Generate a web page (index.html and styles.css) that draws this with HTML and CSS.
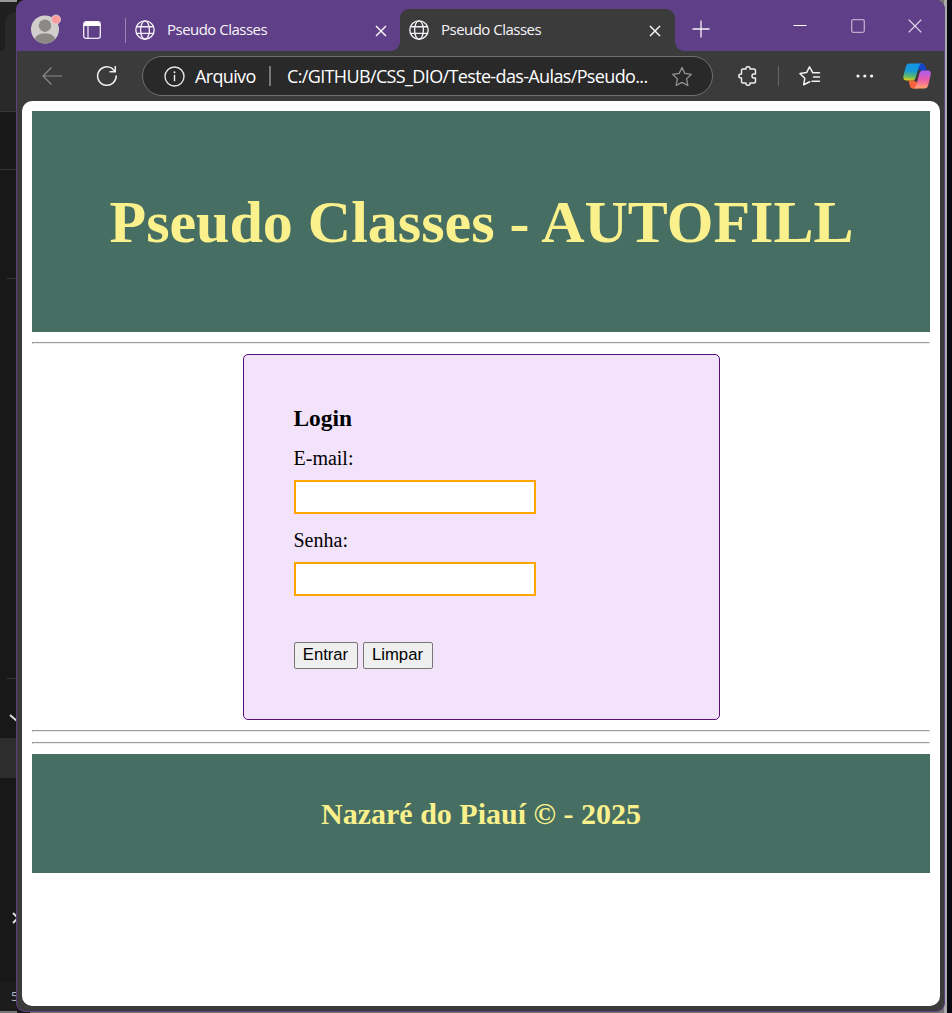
FILE: index.html
```html
<!DOCTYPE html>
<html lang="pt-BR">
<head>
<meta charset="utf-8">
<title>Pseudo Classes</title>
<link rel="stylesheet" href="styles.css">
</head>
<body>
<svg class="defs" aria-hidden="true">
  <symbol id="globe" viewBox="0 0 20 20"><g fill="none" stroke="#f4f0f7" stroke-width="1.35"><circle cx="10" cy="10" r="9.2"/><ellipse cx="10" cy="10" rx="4.4" ry="9.2"/><path d="M1.5 6.700h17M1.500 13.300h17"/></g></symbol>
  <symbol id="cross" viewBox="0 0 12 12"><path d="M1 1l10 10M11 1L1 11" stroke="#f6f3f8" stroke-width="1.5"/></symbol>
</svg>
<div class="desktop">
  <svg class="backdrop" width="17" height="1013" viewBox="0 0 17 1013">
    <path d="M0 0h17v1013H0z" fill="#181818"/>
    <path d="M0 0h17v2H0z" fill="#969996"/>
    <path d="M0 2h17v109H0z" fill="#292929"/>
    <path d="M0 2h17v10q-11 0-12 12v22q0 5-5 5z" fill="#1f1f1f"/>
    <path d="M0 111.500h17M0 169.500h17M7 278.500h10M7 678.500h10" stroke="#373737"/>
    <path d="M0 738h17v40H0z" fill="#2d2d2d"/>
    <path d="M10 715l7 6M13 913l5 5-5 5" stroke="#ddd" stroke-width="2" fill="none"/>
    <path d="M0 982h17v29H0z" fill="#1c1c1c"/>
    <path d="M0 1011h17v2H0z" fill="#777"/>
    <text x="11" y="1001" class="backdrop-text">5</text>
  </svg>
  <div class="window">
    <div class="tabbar">
      <svg class="avatar" width="32" height="32" viewBox="0 0 32 32"><defs><clipPath id="face"><circle cx="15" cy="17.500" r="14"/></clipPath></defs><circle cx="15" cy="17.500" r="14" fill="#d1cfce"/><g clip-path="url(#face)" fill="#8b8886"><circle cx="15" cy="13.700" r="6.200"/><ellipse cx="15" cy="28" rx="10.500" ry="6.700"/></g><circle cx="26" cy="7.500" r="4.500" fill="#ff9c99" stroke="#ddd4e6" stroke-width=".8"/></svg>
      <svg class="workspaces" width="18" height="18" viewBox="0 0 18 18"><rect x=".7" y=".7" width="16.600" height="16.600" rx="2.300" fill="none" stroke="#f3eef7" stroke-width="1.300"/><path d="M1 5V3q0-2 2-2h12q2 0 2 2v2z" fill="#fff"/><path d="M5 5v12" stroke="#f3eef7" stroke-width="1.200"/></svg>
      <span class="tab-divider"></span>
      <div class="tab"><svg width="20" height="20"><use href="#globe"/></svg><span>Pseudo Classes</span><svg class="close" width="12" height="12"><use href="#cross"/></svg></div>
      <div class="tab active"><svg width="20" height="20"><use href="#globe"/></svg><span>Pseudo Classes</span><svg class="close" width="12" height="12"><use href="#cross"/></svg></div>
      <svg class="newtab" width="18" height="18" viewBox="0 0 18 18"><path d="M9 .500v17M.500 9h17" stroke="#f6f3f8" stroke-width="1.300"/></svg>
      <div class="controls">
        <svg width="14" height="14" viewBox="0 0 14 14"><path d="M.500 6.500h13" stroke="#fff"/></svg>
        <svg width="14" height="14" viewBox="0 0 14 14"><rect x=".7" y=".7" width="12.600" height="12.600" rx="1.500" fill="none" stroke="#bcabcf" stroke-width="1.300"/></svg>
        <svg width="14" height="14" viewBox="0 0 14 14"><path d="M.700.700l12.600 12.600M13.300.700L.700 13.300" stroke="#e9e2ef" stroke-width="1.200"/></svg>
      </div>
    </div>
    <div class="toolbar">
      <svg class="back" width="20" height="18" viewBox="0 0 20 18"><path d="M20 9H1M9.500.500L1 9l8.500 8.500" fill="none" stroke="#898989" stroke-width="1.200"/></svg>
      <svg class="reload" width="22" height="22" viewBox="0 0 22 22"><path d="M20.200 10.500A9.300 9.300 0 1 1 15.800 3.100L19 6.500M19.300 1v5.700h-5.800" fill="none" stroke="#f1f1f1" stroke-width="1.500"/></svg>
      <div class="address">
        <svg class="info" width="21" height="21" viewBox="0 0 21 21"><circle cx="10.500" cy="10.500" r="9.500" fill="none" stroke="#e5e5e5" stroke-width="1.400"/><path d="M10.500 8.800v6.400" stroke="#eee" stroke-width="1.400"/><circle cx="10.500" cy="6.200" r="1" fill="#eee"/></svg>
        <span class="scheme">Arquivo</span>
        <span class="address-divider"></span>
        <span class="path">C:/GITHUB/CSS_DIO/Teste-das-Aulas/Pseudo...</span>
        <svg class="star" width="22" height="21" viewBox="0 0 22 21"><path d="M11 1.500l2.800 5.900 6.600.900-4.800 4.600 1.200 6.600L11 16.400l-5.800 3.100 1.200-6.600L1.600 8.300l6.600-.900z" fill="none" stroke="#939393" stroke-width="1.300" stroke-linejoin="round"/></svg>
      </div>
      <svg class="extension" width="20" height="20" viewBox="0 0 20 20"><path d="M5 3H8q-.3-2.300 2-2.300T12 3h4q1.500 0 1.500 1.500V8h-1.700q-1.800 0-1.800 2t1.800 2h1.700v3.500q0 1.500-1.500 1.500H12q.3 2.300-2 2.300T8 17H5q-1.500 0-1.500-1.500V12Q.8 12 .8 10T3.500 8V4.500Q3.500 3 5 3z" fill="none" stroke="#f0f0f0" stroke-width="1.450" stroke-linejoin="round"/></svg>
      <span class="tool-divider"></span>
      <svg class="favorites" width="22" height="20" viewBox="0 0 22 20"><path d="M13.600 6.400L10.500.900 7.600 6.600 1 7.600l4.800 4.700-1.100 6.400 6-2.900M13.500 6.700h7M14.500 11h6M13 15.300h7.500" fill="none" stroke="#f0f0f0" stroke-width="1.500" stroke-linejoin="round" stroke-linecap="round"/></svg>
      <svg class="more" width="18" height="4" viewBox="0 0 18 4"><g fill="#f4f4f4"><circle cx="2" cy="2" r="1.600"/><circle cx="8.800" cy="2" r="1.600"/><circle cx="15.600" cy="2" r="1.600"/></g></svg>
      <svg class="copilot" width="28" height="26" viewBox="0 0 28 26">
        <defs>
          <linearGradient id="cool" x1=".1" y1="0" x2="0" y2="1"><stop offset="0" stop-color="#1595e8"/><stop offset=".4" stop-color="#1699d6"/><stop offset=".72" stop-color="#5bb86c"/><stop offset="1" stop-color="#f5cf13"/></linearGradient>
          <linearGradient id="warm" x1="0" y1="0" x2="0" y2="1"><stop offset="0" stop-color="#a75ef2"/><stop offset=".5" stop-color="#e85bab"/><stop offset="1" stop-color="#ffa36c"/></linearGradient>
        </defs>
        <path d="M13 .500h6.500q2 0 2.700 2.500l1.300 4.500h-5.500l-4-2z" fill="#1744c6"/>
        <path d="M15 25.500H9.500q-2 0-2.600-2.500L5.500 17.500H11l3 2z" fill="#f5623b"/>
        <path d="M6.500.500H19q-2.300.400-3.200 3.500L12.500 15q-.800 2.500-3 2.500H3.500Q-.300 17.500.400 13L2.700 4Q3.700.500 6.500.500z" fill="url(#cool)"/>
        <path d="M21.500 25.500H10q2.500-.500 3.300-3.500L16.500 10q.800-2.500 3-2.500H25q3.300 0 2.700 4.500L25.300 22q-1 3.500-3.800 3.500z" fill="url(#warm)"/>
      </svg>
    </div>
    <main class="page">
      <header class="banner"><h1>Pseudo Classes - AUTOFILL</h1></header>
      <hr>
      <form class="login">
        <h3>Login</h3>
        <label for="email">E-mail:</label>
        <input type="email" id="email">
        <label for="senha">Senha:</label>
        <input type="password" id="senha">
        <div class="buttons"><button type="button">Entrar</button><button type="reset">Limpar</button></div>
      </form>
      <hr>
      <hr>
      <footer class="banner foot"><h2>Nazaré do Piauí © - 2025</h2></footer>
    </main>
  </div>
</div>
</body>
</html>
```

FILE: styles.css
```css
* { box-sizing: border-box; }
body { margin: 0; overflow: hidden; font-family: "Liberation Serif", serif; }
svg { display: block; flex: none; }
.defs { position: absolute; width: 0; height: 0; }

.desktop {
  display: flex;
  width: 952px;
  height: 1013px;
  background: linear-gradient(90deg, #181818 0 30px, #777 30px 944px, #aaa 944px 947px, #090913 947px);
}
.backdrop { margin-right: -1px; }
.backdrop-text { font: 13px "Open Sans", sans-serif; fill: #aab4bd; }

.window {
  display: flex;
  flex-direction: column;
  width: 929px;
  height: 1012px;
  border: 1px solid #5e3e85;
  border-top: 0;
  border-radius: 9px;
  background: #3b3b3b;
  overflow: hidden;
  position: relative;
}

.tabbar {
  display: flex;
  flex: none;
  height: 51px;
  background: #5f3f87;
  color: #f7f4fa;
  font: 15px "Open Sans", sans-serif;
}
.avatar { margin: 12px 0 0 13px; }
.workspaces { margin: 21px 0 0 21px; }
.tab-divider { width: 1px; height: 25px; margin: 18px 0 0 24px; background: #9a84b3; }
.tab {
  display: flex;
  align-items: center;
  width: 274px;
  height: 42px;
  margin-top: 9px;
  padding: 0 13px 0 9px;
}
.tab span { flex: 1; margin: -2px 0 0 12px; white-space: nowrap; letter-spacing: -0.52px; }
.tab .close { position: relative; top: 1px; }
.tab.active {
  position: relative;
  width: 275px;
  padding-right: 14px;
  border-radius: 9px 9px 0 0;
  background: #3b3b3b;
}
.tab.active::before, .tab.active::after {
  content: "";
  position: absolute;
  bottom: 0;
  width: 9px;
  height: 9px;
}
.tab.active::before { left: -9px; background: radial-gradient(circle at 0 0, #5f3f87 8.5px, #3b3b3b 9px); }
.tab.active::after { right: -9px; background: radial-gradient(circle at 100% 0, #5f3f87 8.5px, #3b3b3b 9px); }
.newtab { margin: 20px 0 0 17px; }
.controls { display: flex; gap: 43.5px; margin: 19px 0 0 83px; }

.toolbar { display: flex; flex: none; height: 50px; align-items: center; color: #fff; }
.back { margin-left: 25px; }
.reload { margin-left: 34px; }
.address {
  display: flex;
  align-items: center;
  width: 571px;
  height: 40px;
  margin-left: 24px;
  padding: 0 19px 0 21px;
  border: 1px solid #707070;
  border-radius: 20px;
  background: #292929;
  font: 18px "Open Sans", sans-serif;
  white-space: nowrap;
}
.scheme { width: 61px; margin-left: 10px; letter-spacing: -0.65px; }
.address-divider { width: 2px; height: 20px; margin: 0 16px 0 13px; background: #777; }
.path { width: 362px; letter-spacing: -0.64px; }
.star { margin-left: auto; }
.extension { margin-left: 25px; }
.tool-divider { width: 1px; height: 20px; margin-left: 20px; background: #666; }
.favorites { margin-left: 20px; }
.more { margin-left: 35px; }
.copilot { margin-left: 29px; }

.page {
  display: flex;
  flex-direction: column;
  gap: 10px;
  width: 918px;
  height: 905px;
  margin-left: 5px;
  padding: 10px;
  border-radius: 10px;
  background: #fff;
}
.banner {
  display: flex;
  flex: none;
  align-items: center;
  justify-content: center;
  height: 221px;
  background: #466e62;
  color: #faf18c;
}
.banner h1 { margin: 1px 0 0 1px; font-size: 60px; }
.foot { height: 119px; }
.foot h2 { margin: 0; font-size: 30px; }
hr { width: 100%; height: 2px; margin: 0; border: 1px solid; border-color: #9a9a9a #eee #eee #9a9a9a; }

.login {
  display: flex;
  flex-direction: column;
  align-items: flex-start;
  align-self: center;
  width: 477px;
  height: 366px;
  padding: 50px;
  border: 1px solid #560f78;
  border-radius: 5px;
  background: #f3e3fa;
  font-size: 20px;
  line-height: 23px;
}
.login h3 { margin: 0 0 16px; font-size: 23.4px; line-height: 26px; }
.login input {
  width: 242px;
  height: 34px;
  margin: 10px 0 15px;
  padding: 0;
  border: 2px solid orange;
  background: #fff;
}
.buttons { display: flex; gap: 5px; margin-top: 31px; }
.buttons button {
  height: 27px;
  width: 64px;
  padding: 0 0 2px;
  border: 1px solid #767676;
  border-radius: 2px;
  background: #efefef;
  color: #000;
  font: 16.67px "Liberation Sans", sans-serif;
}
.buttons button + button { width: 70px; }
```
